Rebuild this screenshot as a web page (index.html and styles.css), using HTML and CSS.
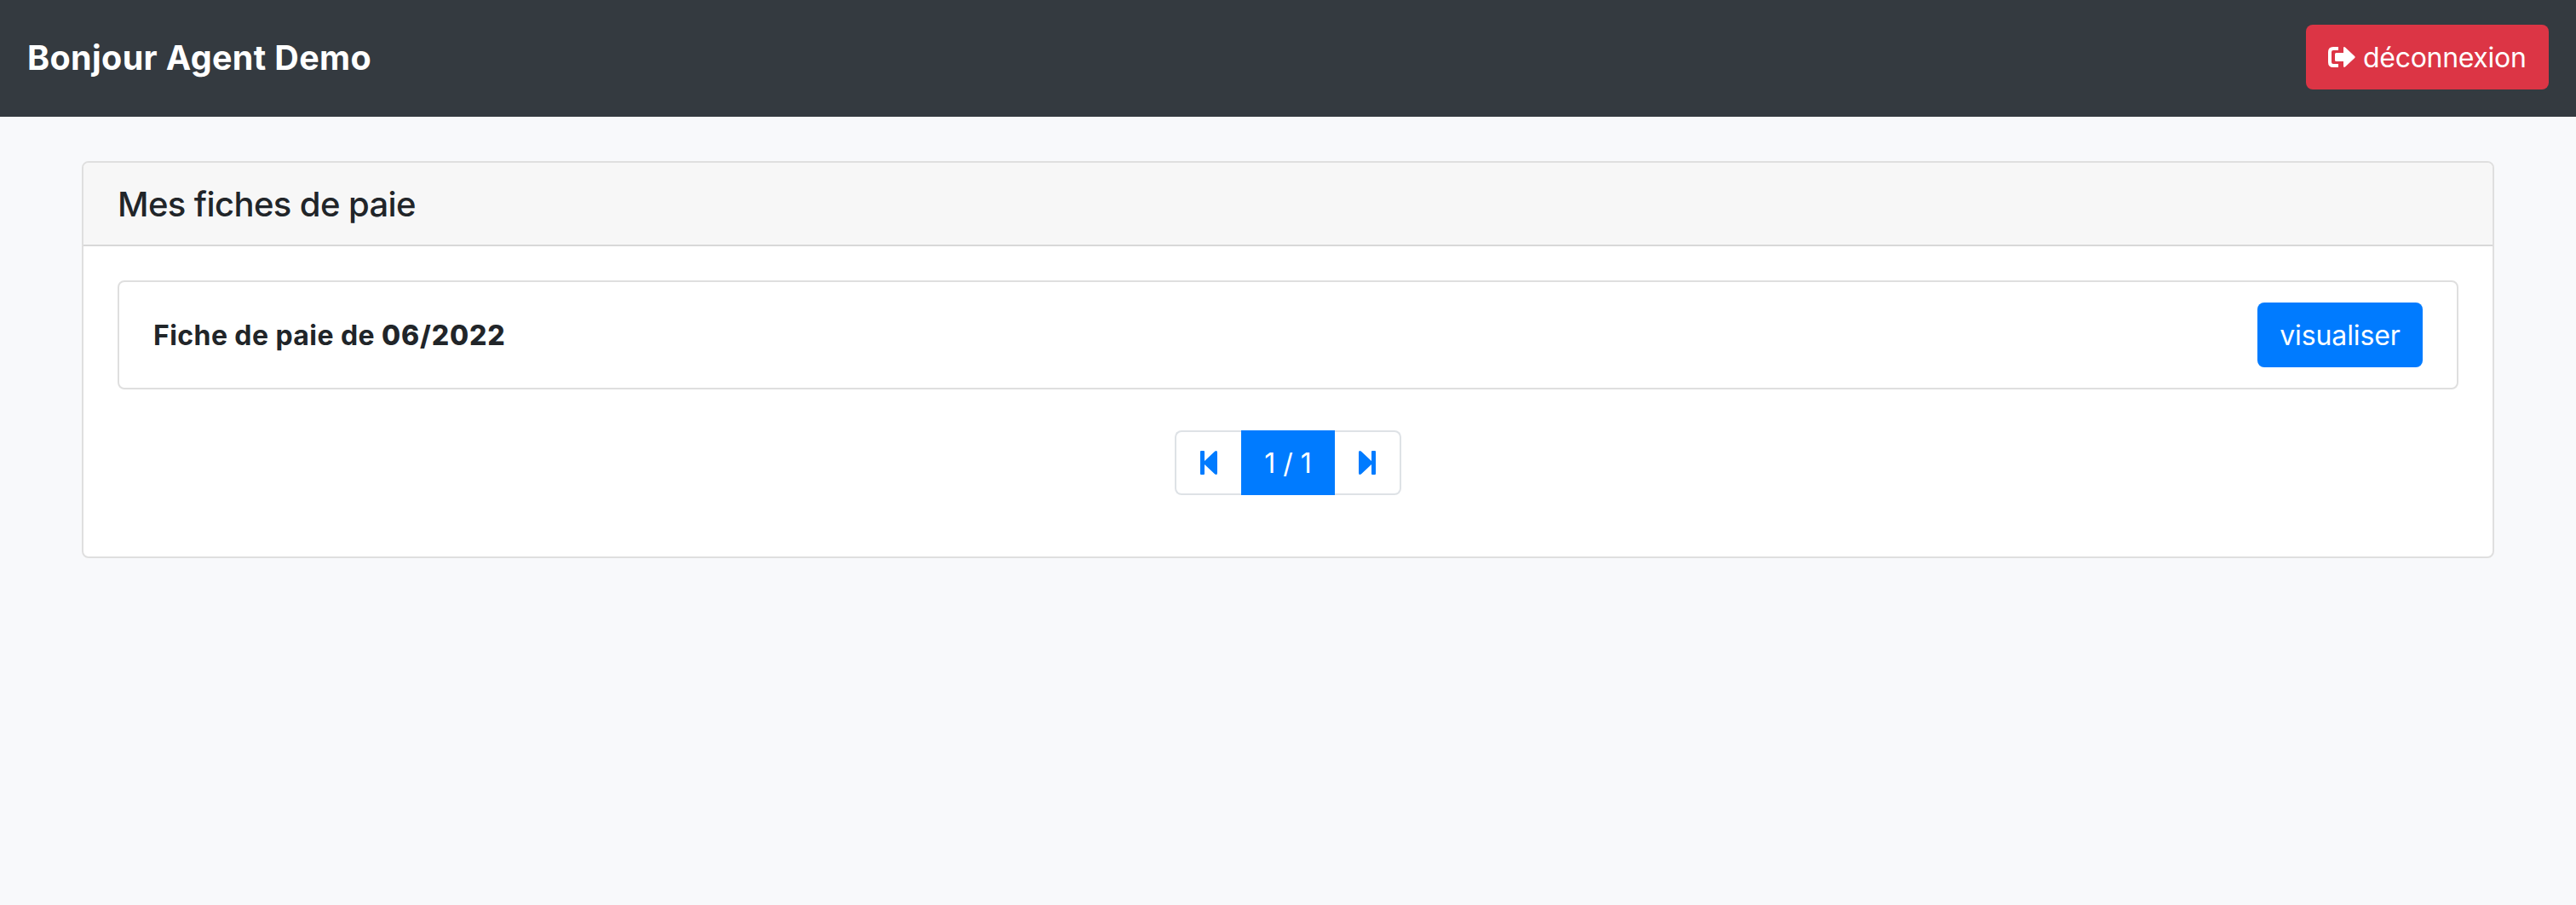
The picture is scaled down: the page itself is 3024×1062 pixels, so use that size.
FILE: index.html
```html
<!DOCTYPE html>
<html lang="fr">
<head>
<meta charset="utf-8">
<title>Mes fiches de paie</title>
<link rel="stylesheet" href="styles.css">
</head>
<body>
<header class="navbar">
  <span class="brand">Bonjour Agent Demo</span>
  <a class="btn btn-danger"><svg class="icon-logout" viewBox="0 0 32 24" aria-hidden="true"><path d="M12 0v4H6Q4 4 4 6v12q0 2 2 2h6v4H6q-6 0-6-6V6q0-6 6-6z"/><path d="M8 8.500q0-1.500 1.500-1.500H18V1.500Q18-.6 20 .4L31.200 11q.9 1 0 2L20 23.600q-2 1-2-1.100V17H9.500Q8 17 8 15.500z"/></svg><span class="label">déconnexion</span></a>
</header>
<main class="card">
  <div class="card-header"><h1 class="card-title">Mes fiches de paie</h1></div>
  <div class="card-body">
    <section class="payslip">
      <span class="payslip-label label">Fiche de paie de <strong>06/2022</strong></span>
      <a class="btn btn-primary"><span class="label">visualiser</span></a>
    </section>
    <nav class="pagination">
      <a class="page-link page-first"><svg class="icon-step" viewBox="0 0 20 28" aria-hidden="true"><path d="M1 0H4Q5 0 5 1V12L17 .7Q20-1 20 2V26Q20 29 17 27.300L5 16V27Q5 28 4 28H1Q0 28 0 27V1Q0 0 1 0Z"/></svg></a>
      <span class="page-link page-current"><span class="label">1 / 1</span></span>
      <a class="page-link page-last"><svg class="icon-step icon-flip" viewBox="0 0 20 28" aria-hidden="true"><path d="M1 0H4Q5 0 5 1V12L17 .7Q20-1 20 2V26Q20 29 17 27.300L5 16V27Q5 28 4 28H1Q0 28 0 27V1Q0 0 1 0Z"/></svg></a>
    </nav>
  </div>
</main>
</body>
</html>
```
FILE: styles.css
```css
* { box-sizing: border-box; }
body {
  margin: 0;
  background: #f8f9fb;
  color: #212529;
  font: 400 32px/48px Inter, "Liberation Sans", sans-serif;
}
.navbar {
  display: flex;
  align-items: flex-start;
  justify-content: space-between;
  height: 137px;
  padding: 29px 32px 0;
  background: #343a40;
}
.brand {
  padding-top: 9px;
  color: #fff;
  font-size: 39.500px;
  font-weight: 700;
  line-height: 60px;
  letter-spacing: .35px;
}
.btn {
  display: flex;
  align-items: center;
  justify-content: center;
  height: 76px;
  border-radius: 8px;
  color: #fff;
}
.label { padding-top: 2px; }
.btn-danger {
  justify-content: flex-start;
  width: 285px;
  padding-left: 26px;
  gap: 9px;
  background: #dc3545;
  letter-spacing: -.3px;
}
.btn-primary { width: 194px; background: #007bff; letter-spacing: -.1px; }
.icon-logout { width: 32px; height: 24px; fill: #fff; }
.card {
  height: 466px;
  margin: 52px 96px 0;
  border: 2px solid #dfdfdf;
  border-radius: 8px;
  background: #fff;
}
.card-header {
  height: 98px;
  padding: 25px 40px 23px;
  border-bottom: 2px solid #d8d8d8;
  border-radius: 6px 6px 0 0;
  background: #f7f7f7;
}
.card-title { margin: 0; font-size: 40px; font-weight: 500; line-height: 48px; letter-spacing: -.6px; }
.card-body { padding: 40px; }
.payslip {
  display: flex;
  align-items: center;
  justify-content: space-between;
  height: 128px;
  padding: 0 40px;
  border: 2px solid #dfdfdf;
  border-radius: 8px;
}
.payslip-label { font-weight: 700; letter-spacing: .42px; }
.payslip-label strong { font-weight: 800; letter-spacing: .85px; }
.pagination { display: flex; justify-content: center; margin-top: 48px; }
.page-link {
  display: flex;
  align-items: center;
  justify-content: center;
  width: 78px;
  height: 76px;
  border: 2px solid #dee2e6;
}
.page-first { border-right: 0; border-radius: 8px 0 0 8px; }
.page-last { border-left: 0; border-radius: 0 8px 8px 0; }
.page-current { width: 110px; border-color: #007bff; background: #007bff; color: #fff; }
.icon-step { width: 20px; height: 28px; fill: #007bff; }
.icon-flip { transform: scaleX(-1); }
```
